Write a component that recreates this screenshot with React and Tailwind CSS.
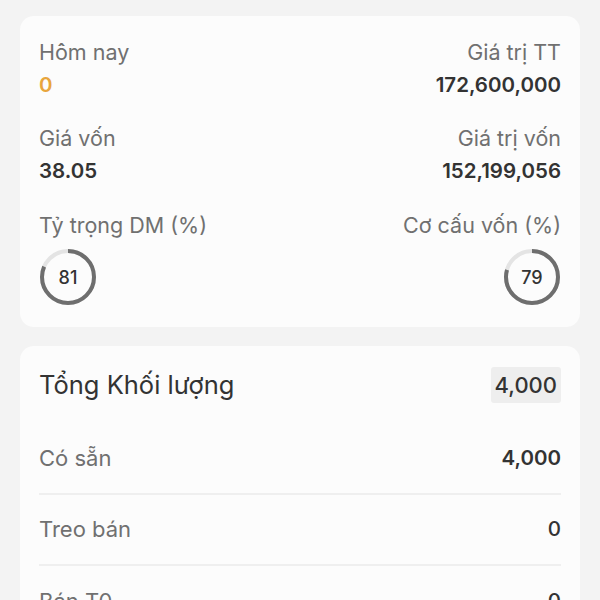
import React from "react";

function Ring({ value }) {
  const r = 26;
  const c = 2 * Math.PI * r;
  return (
    <div className="relative w-[58px] h-[58px]">
      <svg width="58" height="58" viewBox="0 0 58 58" className="-rotate-90">
        <circle cx="29" cy="29" r={r} fill="none" stroke="#e4e4e4" strokeWidth="4" />
        <circle
          cx="29"
          cy="29"
          r={r}
          fill="none"
          stroke="#6e6e6e"
          strokeWidth="4"
          strokeDasharray={`${(c * value) / 100} ${c}`}
        />
      </svg>
      <div className="absolute inset-0 flex items-center justify-center text-[18px] font-medium text-[#333]">
        {value}
      </div>
    </div>
  );
}

function Stat({ label, value, right, valueClass = "text-[#333]" }) {
  return (
    <div className={right ? "flex flex-col items-end" : "flex flex-col items-start"}>
      <div className="text-[21.5px] leading-[28px] text-[#707070]">{label}</div>
      <div className={`mt-[5px] text-[20.5px] leading-[28px] font-semibold ${valueClass}`}>{value}</div>
    </div>
  );
}

export default function App() {
  const rows = [
    { label: "Có sẵn", value: "4,000", weight: "font-semibold" },
    { label: "Treo bán", value: "0", weight: "font-medium" },
    { label: "Bán T0", value: "0", weight: "font-medium" },
  ];

  return (
    <div
      className="w-[600px] h-[600px] overflow-hidden bg-[#f3f3f3] px-5 pt-4"
      style={{ fontFamily: "Inter, 'Noto Sans', sans-serif" }}
    >
      {/* tổng quan */}
      <div className="bg-[#fcfcfc] rounded-[14px] px-[19px] pt-[22px] pb-[21px]">
        <div className="grid grid-cols-2">
          <Stat label="Hôm nay" value="0" valueClass="text-[#e8a53c]" />
          <Stat label="Giá trị TT" value="172,600,000" right />
        </div>
        <div className="grid grid-cols-2 mt-[25px]">
          <Stat label="Giá vốn" value="38.05" />
          <Stat label="Giá trị vốn" value="152,199,056" right />
        </div>
        <div className="grid grid-cols-2 mt-[26px]">
          <div className="flex flex-col items-start">
            <div className="text-[21.5px] leading-[28px] text-[#707070]">Tỷ trọng DM (%)</div>
            <div className="mt-[9px]">
              <Ring value={81} />
            </div>
          </div>
          <div className="flex flex-col items-end">
            <div className="text-[21.5px] leading-[28px] text-[#707070]">Cơ cấu vốn (%)</div>
            <div className="mt-[9px]">
              <Ring value={79} />
            </div>
          </div>
        </div>
      </div>

      {/* khối lượng */}
      <div className="mt-[19px] bg-[#fcfcfc] rounded-[14px] px-[19px] pt-[21px]">
        <div className="flex items-center justify-between h-[36px]">
          <div className="text-[25.5px] text-[#333]">Tổng Khối lượng</div>
          <div className="bg-[#eeeeee] rounded-[3px] px-[4px] h-[36px] flex items-center text-[22px] font-medium text-[#333]">
            4,000
          </div>
        </div>
        <div className="mt-[21px]">
          {rows.map((row, i) => (
            <div
              key={i}
              className={`flex items-center justify-between h-[71px] ${
                i < rows.length - 1 ? "border-b-2 border-[#efefef]" : ""
              }`}
            >
              <div className="text-[22px] text-[#707070]">{row.label}</div>
              <div className={`text-[20.5px] text-[#333] ${row.weight}`}>{row.value}</div>
            </div>
          ))}
        </div>
      </div>
    </div>
  );
}
